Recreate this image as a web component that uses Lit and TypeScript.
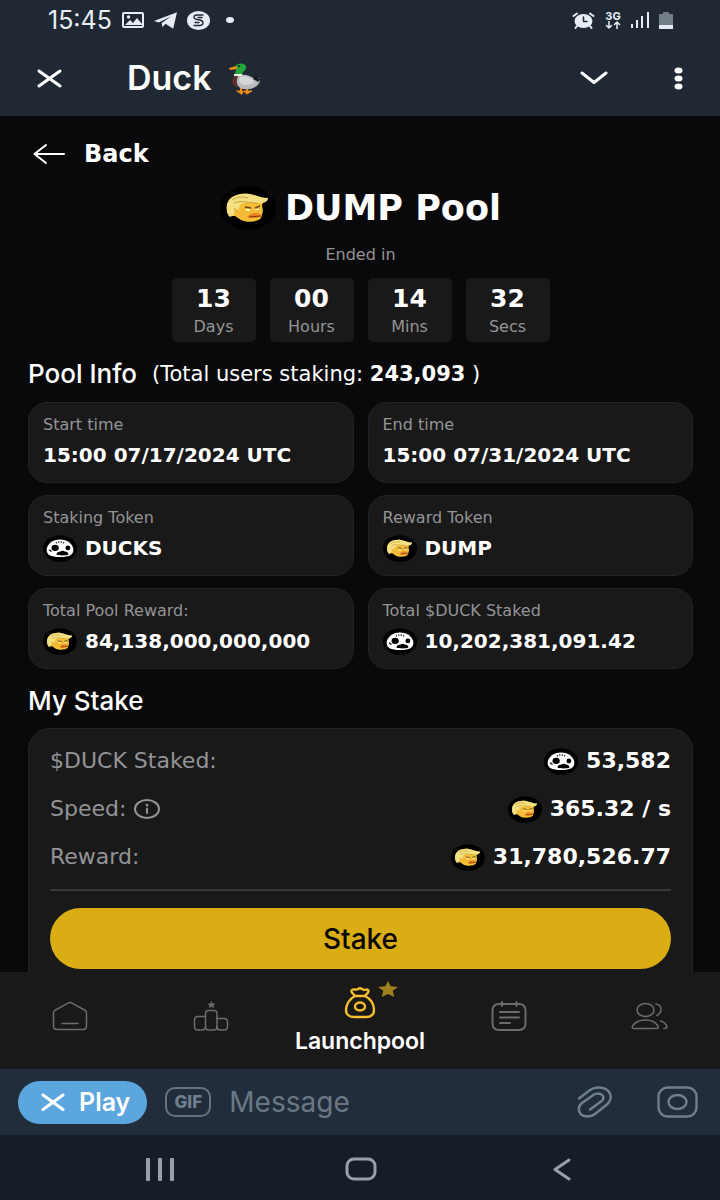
import { html, css, svg, LitElement } from "lit";
import { customElement, property, state } from "lit/decorators.js";
import { classMap } from "lit/directives/class-map.js";

type Token = "duck" | "dump";

interface InfoCard {
  label: string;
  value: string;
  token?: Token;
}

const DUMP_ART = svg`
  <path d="M9 30C6 25 6 17 10 13c4-5 13-6 20-5 6 1 10 4 15 5l-3 6 1 6-2 7c-3 4-14 5-20 2l-6-4z" fill="#f5bd35" />
  <path d="M10 31C5 26 6 17 10 13c4-4 12-6 19-5 7 1 12 4 19 4 0 4-4 5-9 5-8 0-14-1-19 2l-2 5-3-1-1 6z" fill="#f3e082" />
  <path d="M14 17c7-3 14 0 23 0M12 14c4-3 10-4 16-2M14 22l3 4" fill="none" stroke="#c9a03a" stroke-width="1" />
  <path d="M25 21l6 1M35 22l5-2" stroke="#6b481a" stroke-width="1.500" />
  <path d="M26 23h4v2h-4zM35 23h4v1h-4z" fill="#fff3c5" />
  <path d="M27 31c3-3 5-4 8-4 3 0 5 1 7 3-4 2-9 3-15 1z" fill="#e97f22" />
  <path d="M29 31c4 0 8-1 12-1" stroke="#8c3a14" stroke-width="1" />
`;

const DUCK_ART = svg`
  <path d="M28 7C40 7 50 15 50 24C50 32 44 36 28 36C12 36 6 32 6 24C6 15 16 7 28 7Z" fill="#fff" />
  <path d="M22 11v3M26 10v3M30 10v3M34 11v3" stroke="#111" stroke-width="1.500" />
  <ellipse cx="20" cy="21" rx="6" ry="5" fill="#000" />
  <ellipse cx="41" cy="21" rx="4" ry="4" fill="#000" />
  <path d="M22 32c1-4 4-5 7-5 2-2 5-2 7 0 3 0 6 2 6 5-5 2-15 2-20 0z" fill="#000" />
  <path d="M10 24l4 3" stroke="#000" stroke-width="2" />
`;

@customElement("token-coin")
class TokenCoin extends LitElement {
  @property() token: Token = "duck";

  static styles = css`
    :host {
      display: block;
      flex: none;
      width: 34px;
      height: 27px;
    }

    .coin {
      display: block;
      width: 100%;
      height: 100%;
    }
  `;

  render() {
    return html`
      <svg class="coin" viewBox="0 0 56 44" aria-hidden="true">
        <ellipse cx="28" cy="22" rx="28" ry="22" fill="#000" />
        ${this.token === "dump" ? DUMP_ART : DUCK_ART}
      </svg>
    `;
  }
}

@customElement("app-root")
class AppRoot extends LitElement {
  @state() activeTab = "Launchpool";

  timer = [
    { value: "13", unit: "Days" },
    { value: "00", unit: "Hours" },
    { value: "14", unit: "Mins" },
    { value: "32", unit: "Secs" },
  ];

  cards: InfoCard[] = [
    { label: "Start time", value: "15:00 07/17/2024 UTC" },
    { label: "End time", value: "15:00 07/31/2024 UTC" },
    { label: "Staking Token", value: "DUCKS", token: "duck" },
    { label: "Reward Token", value: "DUMP", token: "dump" },
    { label: "Total Pool Reward:", value: "84,138,000,000,000", token: "dump" },
    { label: "Total $DUCK Staked", value: "10,202,381,091.42", token: "duck" },
  ];

  static styles = css`
    :host {
      display: flex;
      flex-direction: column;
      height: 100vh;
      overflow: hidden;
      background: #09090b;
      color: #fff;
      font-family: Inter, "Liberation Sans", sans-serif;
    }

    * {
      box-sizing: border-box;
    }

    svg {
      display: block;
      flex: none;
      fill: none;
      stroke-linecap: round;
      stroke-linejoin: round;
    }

    button {
      display: flex;
      align-items: center;
      border: 0;
      padding: 0;
      background: none;
      color: inherit;
      font: inherit;
      cursor: pointer;
    }

    h1,
    h2,
    p,
    dl,
    dd {
      margin: 0;
    }

    .status {
      display: flex;
      flex: none;
      align-items: center;
      justify-content: space-between;
      height: 40px;
      padding: 0 47px 0 48px;
      background: #1f2833;
      color: #e8edf5;
    }

    .status-group {
      display: flex;
      align-items: center;
      gap: 10px;
    }

    .time {
      font-size: 25px;
      line-height: 28px;
    }

    .network {
      display: flex;
      flex-direction: column;
      align-items: center;
      font-size: 11px;
      font-weight: 700;
      line-height: 10px;
    }

    .header {
      display: flex;
      flex: none;
      align-items: center;
      height: 76px;
      padding: 0 37px;
      background: #1f2833;
    }

    .name {
      display: flex;
      flex: 1;
      align-items: center;
      gap: 17px;
      margin-left: 65px;
      font-size: 34px;
      font-weight: 600;
      line-height: 40px;
    }

    .more {
      margin-left: 66px;
    }

    .pool {
      flex: 1;
      min-height: 0;
      overflow: hidden;
      padding: 20px 27px 0 28px;
      font-family: "DejaVu Sans", sans-serif;
    }

    .back {
      gap: 19px;
      height: 36px;
      padding-left: 5px;
      font-size: 24px;
      font-weight: 700;
    }

    .title {
      display: flex;
      align-items: center;
      justify-content: center;
      gap: 9px;
      height: 44px;
      margin-top: 14px;
      font-size: 35px;
      font-weight: 700;
    }

    .title-coin {
      width: 56px;
      height: 44px;
    }

    .ended {
      margin-top: 15px;
      color: #949496;
      font-size: 16px;
      line-height: 20px;
      text-align: center;
    }

    .timer {
      display: flex;
      justify-content: center;
      gap: 14px;
      margin-top: 13px;
    }

    .unit {
      display: flex;
      flex-direction: column;
      gap: 4px;
      width: 84px;
      padding: 7px 0 5px;
      border-radius: 5px;
      background: #19191a;
      text-align: center;
    }

    .unit-value {
      font-size: 25px;
      font-weight: 700;
      line-height: 28px;
    }

    .label {
      color: #949496;
      font-size: 16px;
      line-height: 20px;
    }

    .section-head {
      display: flex;
      align-items: center;
      gap: 15px;
      margin-top: 18px;
    }

    .section-title {
      font-family: Inter, sans-serif;
      font-size: 26px;
      font-weight: 500;
      line-height: 28px;
    }

    .stake-title {
      margin-top: 18px;
    }

    .users {
      font-size: 21px;
      line-height: 28px;
      white-space: nowrap;
    }

    .users strong {
      font-weight: 700;
    }

    .cards {
      display: grid;
      grid-template-columns: 1fr 1fr;
      gap: 12px 14px;
      margin-top: 14px;
    }

    .card {
      display: flex;
      flex-direction: column;
      gap: 5px;
      padding: 12px 14px;
      border: 1px solid #242427;
      border-radius: 19px;
      background: #19191a;
    }

    .value {
      display: flex;
      align-items: center;
      gap: 8px;
      font-size: 20px;
      font-weight: 700;
      line-height: 30px;
      white-space: nowrap;
    }

    .panel {
      margin-top: 13px;
      padding: 16px 21px 24px;
      border: 1px solid #242427;
      border-radius: 22px;
      background: #19191a;
    }

    .rows {
      display: flex;
      flex-direction: column;
      gap: 16px;
      padding-bottom: 16px;
      border-bottom: 2px solid #39393b;
    }

    .row {
      display: flex;
      align-items: center;
      justify-content: space-between;
      line-height: 32px;
    }

    .row-label {
      display: flex;
      align-items: center;
      gap: 8px;
      color: #949496;
      font-size: 22px;
    }

    .row-value {
      display: flex;
      align-items: center;
      gap: 8px;
      font-size: 22px;
      font-weight: 700;
    }

    .stake {
      justify-content: center;
      width: 100%;
      height: 61px;
      margin-top: 17px;
      border-radius: 40px;
      background: #d9ad13;
      color: #09090b;
      font-family: Inter, sans-serif;
      font-size: 28px;
      font-weight: 500;
    }

    .tabs {
      display: grid;
      flex: none;
      grid-template-columns: 1fr 1fr 1.12fr 1fr 1fr;
      padding: 15px 0 14px;
      background: #19191a;
    }

    .tab {
      flex-direction: column;
      justify-content: center;
      gap: 8px;
      padding-bottom: 10px;
      color: #6c6c6e;
      font-size: 23px;
      font-weight: 600;
      line-height: 28px;
    }

    .tab.active {
      padding-bottom: 0;
      color: #fff;
    }

    .tab-icon {
      position: relative;
    }

    .star {
      position: absolute;
      top: -6px;
      left: 34px;
    }

    .composer {
      display: flex;
      flex: none;
      align-items: center;
      height: 66px;
      padding: 0 22px 0 18px;
      background: #212d3b;
      color: #6f7f8e;
    }

    .play {
      gap: 14px;
      height: 43px;
      padding: 0 17px 0 23px;
      border-radius: 22px;
      background: #5ca6df;
      color: #fff;
      font-size: 25px;
      font-weight: 600;
    }

    .gif {
      justify-content: center;
      flex: none;
      width: 46px;
      height: 30px;
      margin: 0 18px;
      border: 2px solid #667482;
      border-radius: 10px;
      font-size: 17px;
      font-weight: 800;
    }

    .message {
      flex: 1;
      min-width: 0;
      border: 0;
      padding: 0;
      outline: 0;
      background: none;
      color: #fff;
      font: 28px/36px Inter, "Liberation Sans", sans-serif;
    }

    .message::placeholder {
      color: #6a7886;
      opacity: 1;
    }

    .camera {
      margin-left: 44px;
    }

    .system {
      display: grid;
      flex: none;
      grid-template-columns: repeat(3, 1fr);
      height: 65px;
      padding: 3px 58px 0 60px;
      background: #151e27;
    }

    .system button {
      justify-content: center;
    }
  `;

  render() {
    return html`
      ${this.renderStatus()} ${this.renderHeader()}
      <main class="pool">
        <button class="back">
          <svg width="32" height="22" viewBox="0 0 32 22" stroke="#fff" stroke-width="2">
            <path d="M31 11H2M13 2L1.500 11L13 20" />
          </svg>
          Back
        </button>
        <h1 class="title">
          <token-coin class="title-coin" token="dump"></token-coin>
          DUMP Pool
        </h1>
        <p class="ended">Ended in</p>
        <div class="timer">
          ${this.timer.map(
            (t) => html`
              <div class="unit">
                <span class="unit-value">${t.value}</span>
                <span class="label">${t.unit}</span>
              </div>
            `
          )}
        </div>
        <div class="section-head">
          <h2 class="section-title">Pool Info</h2>
          <p class="users">(Total users staking: <strong>243,093</strong> )</p>
        </div>
        <dl class="cards">${this.cards.map((c) => this.renderCard(c))}</dl>
        <h2 class="section-title stake-title">My Stake</h2>
        ${this.renderStake()}
      </main>
      ${this.renderTabs()} ${this.renderComposer()} ${this.renderSystem()}
    `;
  }

  renderStatus() {
    return html`
      <div class="status">
        <div class="status-group">
          <span class="time">15:45</span>
          <svg width="22" height="16" viewBox="0 0 22 16">
            <rect x="1" y="1" width="20" height="14" rx="1" stroke="currentColor" stroke-width="2" />
            <path d="M3 13L8 8L11 11L15 6L20 12V13Z" fill="currentColor" />
            <circle cx="6.500" cy="5" r="1.700" fill="currentColor" />
          </svg>
          <svg width="23" height="17" viewBox="0 0 24 17">
            <path d="M0 9L24 0L20 17L12 12L9 15.500L8 11L18 4L5 10.500Z" fill="currentColor" />
          </svg>
          <svg width="23" height="19" viewBox="0 0 23 19">
            <ellipse cx="11.500" cy="9.500" rx="11.500" ry="9.500" fill="currentColor" />
            <path d="M16 4H10C6 4 6 8 10 8.500L13 9C17 10 17 14 13 14.500H7M15 6.500H11M12 11.500H8" stroke="#1f2833" stroke-width="1.300" />
          </svg>
          <svg width="24" height="8" viewBox="0 0 24 8">
            <ellipse cx="10" cy="4" rx="4" ry="3" fill="currentColor" />
          </svg>
        </div>
        <div class="status-group">
          <svg width="23" height="17" viewBox="0 0 23 17" stroke="currentColor">
            <ellipse cx="11.500" cy="9" rx="9" ry="7" fill="currentColor" stroke="none" />
            <path d="M1.500 4L5 1.500M21.500 4L18 1.500M5 14L3.500 16M18 14L19.500 16" stroke-width="2" />
            <path d="M11.500 5V9.500H15" stroke="#1f2833" stroke-width="1.500" />
          </svg>
          <span class="network">
            3G
            <svg width="16" height="8" viewBox="0 0 16 8" stroke="currentColor" stroke-width="1.500">
              <path d="M4 0V7M1.500 4.500L4 7L6.500 4.500M12 8V1M9.500 3.500L12 1L14.500 3.500" />
            </svg>
          </span>
          <svg width="18" height="16" viewBox="0 0 18 16">
            <path d="M0 12h2v4H0zM5 8h2v8H5zM10 4h2v12h-2zM16 0h2v16h-2z" fill="currentColor" />
          </svg>
          <svg width="14" height="17" viewBox="0 0 14 17">
            <path d="M4 0h6v2h4v15H0V2h4z" fill="#737d88" />
            <path d="M0 13h14v4H0z" fill="currentColor" />
          </svg>
        </div>
      </div>
    `;
  }

  renderHeader() {
    return html`
      <header class="header">
        <button aria-label="Close">
          <svg width="25" height="19" viewBox="0 0 25 19" stroke="#fff" stroke-width="3">
            <path d="M2 2L23 17M23 2L2 17" />
          </svg>
        </button>
        <div class="name">
          Duck
          <svg width="32" height="33" viewBox="0 0 32 33">
            <path d="M12 25v5M18 25v5" stroke="#ee8a12" stroke-width="2" />
            <path d="M8 29h6l-1 3zM15 29h8l-5 3z" fill="#f28b14" stroke="#f28b14" />
            <path d="M8 12C2 15 1 22 8 26L14 14Z" fill="#5d3029" />
            <path d="M9 14C14 11 22 14 26 17L31 16C32 23 24 28 17 27C9 28 6 21 9 14Z" fill="#b9babb" />
            <path d="M11 15c6-2 12 1 14 5-5 4-12 4-15 0z" fill="#d5d6d7" />
            <path d="M24 17l3-3 1 2 4 1-3 3z" fill="#17181a" />
            <path d="M5 12h8v2H5z" fill="#eee" />
            <path d="M6 5C7 1 15 0 17 4C18 8 14 9 13 12H6L7 8Z" fill="#23a63a" />
            <path d="M7 4L0 6L1 8L8 7Z" fill="#f28b14" />
            <circle cx="10" cy="4" r="1" fill="#123" />
          </svg>
        </div>
        <button aria-label="Minimize">
          <svg width="28" height="14" viewBox="0 0 28 14" stroke="#fff" stroke-width="3">
            <path d="M2 2L14 11.500L26 2" />
          </svg>
        </button>
        <button class="more" aria-label="More">
          <svg width="9" height="23" viewBox="0 0 9 23">
            <g fill="#fff">
              <ellipse cx="4.500" cy="3.500" rx="4" ry="3" />
              <ellipse cx="4.500" cy="11.500" rx="4" ry="3" />
              <ellipse cx="4.500" cy="19.500" rx="4" ry="3" />
            </g>
          </svg>
        </button>
      </header>
    `;
  }

  renderCard(card: InfoCard) {
    return html`
      <div class="card">
        <dt class="label">${card.label}</dt>
        <dd class="value">
          ${card.token ? html`<token-coin token=${card.token}></token-coin>` : ""}
          ${card.value}
        </dd>
      </div>
    `;
  }

  renderStake() {
    return html`
      <section class="panel">
        <dl class="rows">
          <div class="row">
            <dt class="row-label">$DUCK Staked:</dt>
            <dd class="row-value"><token-coin token="duck"></token-coin>53,582</dd>
          </div>
          <div class="row">
            <dt class="row-label">
              Speed:
              <svg width="26" height="20" viewBox="0 0 26 20" stroke="currentColor" stroke-width="2">
                <ellipse cx="13" cy="10" rx="12" ry="9" />
                <path d="M13 9.500V14" />
                <path d="M13 6V6.200" stroke-width="2.500" />
              </svg>
            </dt>
            <dd class="row-value"><token-coin token="dump"></token-coin>365.32 / s</dd>
          </div>
          <div class="row">
            <dt class="row-label">Reward:</dt>
            <dd class="row-value"><token-coin token="dump"></token-coin>31,780,526.77</dd>
          </div>
        </dl>
        <button class="stake">Stake</button>
      </section>
    `;
  }

  renderTab(name: string, icon: unknown) {
    const active = this.activeTab === name;

    return html`
      <button
        class=${classMap({ tab: true, active })}
        aria-label=${name}
        @click=${() => (this.activeTab = name)}
      >
        ${icon} ${active ? html`<span>${name}</span>` : ""}
      </button>
    `;
  }

  renderTabs() {
    return html`
      <nav class="tabs">
        ${this.renderTab(
          "Home",
          html`<svg width="36" height="30" viewBox="0 0 36 30" stroke="currentColor" stroke-width="1.500">
            <path d="M1.500 12C1.500 10.500 2 9.800 3.500 9L16 2.200Q18 1 20 2.200L32.500 9C34 9.800 34.500 10.500 34.500 12V25Q34.500 28.500 31 28.500H5Q1.500 28.500 1.500 25Z" />
            <path d="M10 22.500H26" />
          </svg>`
        )}
        ${this.renderTab(
          "Leaderboard",
          html`<svg width="36" height="30" viewBox="0 0 36 30" stroke="currentColor" stroke-width="1.500">
            <rect x="12.500" y="9.500" width="11.500" height="19.500" rx="3" />
            <path d="M12.500 15.500H5Q1.500 15.500 1.500 19V25.500Q1.500 29 5 29H9Q12.500 29 12.500 25.500M24 17.500H31Q34.500 17.500 34.500 21V25.500Q34.500 29 31 29H27Q24 29 24 25.500" />
            <path d="M18.500 0L19.700 2.500L22.500 2.800L20.500 4.500L21 7L18.500 5.800L16 7L16.500 4.500L14.500 2.800L17.300 2.500Z" fill="currentColor" stroke="none" />
          </svg>`
        )}
        ${this.renderTab(
          "Launchpool",
          html`<span class="tab-icon">
            <svg width="32" height="32" viewBox="0 0 32 32" stroke="#f5bf2c" stroke-width="2.400">
              <path d="M11 9L7.500 5Q7 2 11 2.500Q13 3 14 2Q16 .5 18 2Q20 3.500 22.500 2.500Q25.500 3 24 5.500L21 9Z" />
              <path d="M11 9C5 12 2 18 2 23C2 28 6 30 10 30H22C27 30 30 28 30 23C30 17 27 12 21 9" />
              <ellipse cx="16" cy="19.500" rx="5" ry="4" />
            </svg>
            <svg class="star" width="20" height="16" viewBox="0 0 20 16">
              <path d="M10 0L12.700 5.200L20 6L14.700 9.700L16.200 16L10 13L3.800 16L5.300 9.700L0 6L7.300 5.200Z" fill="#a07f1f" />
            </svg>
          </span>`
        )}
        ${this.renderTab(
          "Tasks",
          html`<svg width="36" height="30" viewBox="0 0 36 30" stroke="currentColor" stroke-width="2">
            <rect x="1.500" y="3" width="33" height="26" rx="6" />
            <path d="M11 1V5M25.500 1V5M9 11H28M9 16.500H28M9 22H19" />
          </svg>`
        )}
        ${this.renderTab(
          "Friends",
          html`<svg width="37" height="28" viewBox="0 0 37 28" stroke="currentColor" stroke-width="1.500">
            <ellipse cx="14.500" cy="8" rx="8.500" ry="6.500" />
            <path d="M3 26.500Q.5 26.500 1.500 24C7 16 22 16 27 24Q28 26.500 26 26.500Z" />
            <path d="M25 2C31 3 32 10 26 13.500M29.500 19C33 20 35.500 23 36 25Q36 26.500 33 26.500" />
          </svg>`
        )}
      </nav>
    `;
  }

  renderComposer() {
    return html`
      <div class="composer">
        <button class="play">
          <svg width="24" height="18" viewBox="0 0 24 18" stroke="#fff" stroke-width="3">
            <path d="M2 2L22 16.500M22 2L2 16.500" />
          </svg>
          Play
        </button>
        <button class="gif">GIF</button>
        <input class="message" type="text" placeholder="Message" aria-label="Message" />
        <button aria-label="Attach">
          <svg width="36" height="32" viewBox="0 0 36 32" stroke="currentColor" stroke-width="2.400">
            <path d="M2 12.500L13 4C18 .8 25 .8 29.500 3.500C35 7.500 35 14 30 18.500L18 28C14 31.200 8 31.200 4 28.500C.8 25 1 20 5 17L17 8.500C20 7 25 7.500 26 10C27 12 26 14 24 15.500L13 23.500" />
          </svg>
        </button>
        <button class="camera" aria-label="Camera">
          <svg width="41" height="32" viewBox="0 0 41 32" stroke="currentColor" stroke-width="2.400">
            <rect x="1.500" y="1.500" width="38" height="29" rx="9" />
            <ellipse cx="20.500" cy="16" rx="9" ry="7" />
          </svg>
        </button>
      </div>
    `;
  }

  renderSystem() {
    return html`
      <nav class="system">
        <button aria-label="Recent apps">
          <svg width="28" height="23" viewBox="0 0 28 23">
            <g fill="#98a0a9">
              <rect width="4" height="23" rx="1" />
              <rect x="12" width="4" height="23" rx="1" />
              <rect x="24" width="4" height="23" rx="1" />
            </g>
          </svg>
        </button>
        <button aria-label="Home screen">
          <svg width="32" height="24" viewBox="0 0 32 24" stroke="#98a0a9" stroke-width="3">
            <rect x="2" y="2" width="28" height="20" rx="7" />
          </svg>
        </button>
        <button aria-label="Go back">
          <svg width="18" height="23" viewBox="0 0 18 23" stroke="#98a0a9" stroke-width="3">
            <path d="M16 2L2 11.500L16 21" />
          </svg>
        </button>
      </nav>
    `;
  }
}
